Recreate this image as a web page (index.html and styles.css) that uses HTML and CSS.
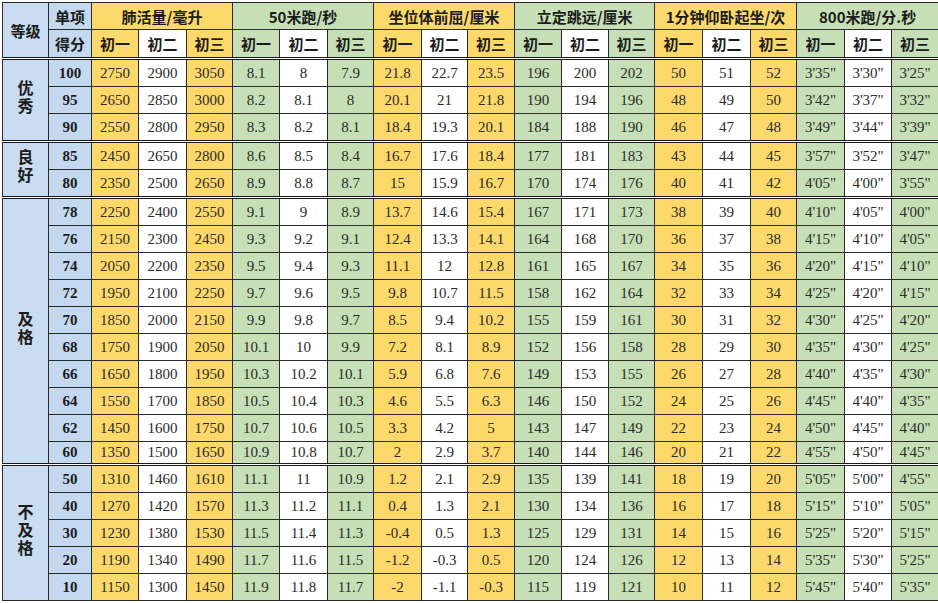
FILE: index.html
```html
<!DOCTYPE html>
<html lang="zh">
<head>
<meta charset="utf-8">
<title>体育成绩评分标准</title>
<link rel="stylesheet" href="styles.css">
</head>
<body>
<table class="score">
<colgroup>
<col class="c-grade"><col class="c-item">
<col class="c47"><col class="c48"><col class="c46">
<col class="c47"><col class="c48"><col class="c46">
<col class="c48"><col class="c46"><col class="c47">
<col class="c47"><col class="c47"><col class="c46">
<col class="c48"><col class="c48"><col class="c46">
<col class="c48"><col class="c47"><col class="c47">
</colgroup>
<thead>
<tr class="h1">
<th class="b lab" rowspan="2">等级</th>
<th class="b">单项</th>
<th class="y" colspan="3">肺活量/毫升</th>
<th class="g" colspan="3">50米跑/秒</th>
<th class="y" colspan="3">坐位体前屈/厘米</th>
<th class="g" colspan="3">立定跳远/厘米</th>
<th class="y" colspan="3">1分钟仰卧起坐/次</th>
<th class="g" colspan="3">800米跑/分.秒</th>
</tr>
<tr class="h2">
<th class="b">得分</th>
<th class="y">初一</th><th class="w">初二</th><th class="y">初三</th>
<th class="g">初一</th><th class="w">初二</th><th class="g">初三</th>
<th class="y">初一</th><th class="w">初二</th><th class="y">初三</th>
<th class="g">初一</th><th class="w">初二</th><th class="g">初三</th>
<th class="y">初一</th><th class="w">初二</th><th class="y">初三</th>
<th class="g">初一</th><th class="w">初二</th><th class="g">初三</th>
</tr>
</thead>
<tbody id="rows"></tbody>
</table>
<script src="app.js"></script>
</body>
</html>
```

FILE: app.js
```js
const groups = [
  { name: "优秀", rows: [
    ["100", "2750","2900","3050","8.1","8","7.9","21.8","22.7","23.5","196","200","202","50","51","52","3'35\"","3'30\"","3'25\""],
    ["95", "2650","2850","3000","8.2","8.1","8","20.1","21","21.8","190","194","196","48","49","50","3'42\"","3'37\"","3'32\""],
    ["90", "2550","2800","2950","8.3","8.2","8.1","18.4","19.3","20.1","184","188","190","46","47","48","3'49\"","3'44\"","3'39\""]
  ]},
  { name: "良好", rows: [
    ["85", "2450","2650","2800","8.6","8.5","8.4","16.7","17.6","18.4","177","181","183","43","44","45","3'57\"","3'52\"","3'47\""],
    ["80", "2350","2500","2650","8.9","8.8","8.7","15","15.9","16.7","170","174","176","40","41","42","4'05\"","4'00\"","3'55\""]
  ]},
  { name: "及格", rows: [
    ["78", "2250","2400","2550","9.1","9","8.9","13.7","14.6","15.4","167","171","173","38","39","40","4'10\"","4'05\"","4'00\""],
    ["76", "2150","2300","2450","9.3","9.2","9.1","12.4","13.3","14.1","164","168","170","36","37","38","4'15\"","4'10\"","4'05\""],
    ["74", "2050","2200","2350","9.5","9.4","9.3","11.1","12","12.8","161","165","167","34","35","36","4'20\"","4'15\"","4'10\""],
    ["72", "1950","2100","2250","9.7","9.6","9.5","9.8","10.7","11.5","158","162","164","32","33","34","4'25\"","4'20\"","4'15\""],
    ["70", "1850","2000","2150","9.9","9.8","9.7","8.5","9.4","10.2","155","159","161","30","31","32","4'30\"","4'25\"","4'20\""],
    ["68", "1750","1900","2050","10.1","10","9.9","7.2","8.1","8.9","152","156","158","28","29","30","4'35\"","4'30\"","4'25\""],
    ["66", "1650","1800","1950","10.3","10.2","10.1","5.9","6.8","7.6","149","153","155","26","27","28","4'40\"","4'35\"","4'30\""],
    ["64", "1550","1700","1850","10.5","10.4","10.3","4.6","5.5","6.3","146","150","152","24","25","26","4'45\"","4'40\"","4'35\""],
    ["62", "1450","1600","1750","10.7","10.6","10.5","3.3","4.2","5","143","147","149","22","23","24","4'50\"","4'45\"","4'40\""],
    ["60", "1350","1500","1650","10.9","10.8","10.7","2","2.9","3.7","140","144","146","20","21","22","4'55\"","4'50\"","4'45\""]
  ]},
  { name: "不及格", rows: [
    ["50", "1310","1460","1610","11.1","11","10.9","1.2","2.1","2.9","135","139","141","18","19","20","5'05\"","5'00\"","4'55\""],
    ["40", "1270","1420","1570","11.3","11.2","11.1","0.4","1.3","2.1","130","134","136","16","17","18","5'15\"","5'10\"","5'05\""],
    ["30", "1230","1380","1530","11.5","11.4","11.3","-0.4","0.5","1.3","125","129","131","14","15","16","5'25\"","5'20\"","5'15\""],
    ["20", "1190","1340","1490","11.7","11.6","11.5","-1.2","-0.3","0.5","120","124","126","12","13","14","5'35\"","5'30\"","5'25\""],
    ["10", "1150","1300","1450","11.9","11.8","11.7","-2","-1.1","-0.3","115","119","121","10","11","12","5'45\"","5'40\"","5'35\""]
  ]}
];
const colClass = ["y","w","y","g","w","g","y","w","y","g","w","g","y","w","y","g","w","g"];
const tbody = document.getElementById("rows");
groups.forEach(group => {
  group.rows.forEach((r, i) => {
    const tr = document.createElement("tr");
    if (i === 0) tr.className = "grp";
    if (r[0] === "60") tr.className = "short";
    if (i === 0) {
      const td = document.createElement("td");
      td.className = "b lab";
      td.rowSpan = group.rows.length;
      const span = document.createElement("span");
      span.className = "vert";
      span.textContent = group.name;
      td.appendChild(span);
      tr.appendChild(td);
    }
    const s = document.createElement("td");
    s.className = "b pts";
    s.textContent = r[0];
    tr.appendChild(s);
    for (let k = 1; k < r.length; k++) {
      const td = document.createElement("td");
      td.className = colClass[k - 1];
      td.textContent = r[k];
      tr.appendChild(td);
    }
    tbody.appendChild(tr);
  });
});
```

FILE: styles.css
```css
html, body {
  margin: 0;
  padding: 0;
  background: #ffffff;
}
.score {
  margin: 2px 0 0 2px;
  width: 936px;
  table-layout: fixed;
  border-collapse: collapse;
  font-family: "Liberation Serif", "Noto Sans CJK SC", serif;
  font-size: 15px;
  color: #2b2b2b;
}
.c-grade { width: 46px; }
.c-item { width: 43px; }
.c46 { width: 46px; }
.c47 { width: 47px; }
.c48 { width: 48px; }
.score th, .score td {
  border: 1px solid #2a2a2a;
  padding: 0;
  text-align: center;
  vertical-align: middle;
  white-space: nowrap;
  overflow: hidden;
}
.score th {
  font-family: "Noto Sans CJK SC", sans-serif;
  font-weight: 700;
  font-size: 15px;
  color: #1c1c1c;
}
.h1 th { height: 26px; }
.h2 th { height: 27px; }
.score td { height: 26px; }
.score tr.short td { height: 21px; }
.score tr.grp td { border-top: 3px double #1a1a1a; }
.b { background: #c4d8f0; }
.y { background: #fdd86a; }
.g { background: #c7dfb6; }
.w { background: #ffffff; }
.pts {
  font-weight: 700;
  color: #1c1c1c;
}
.lab {
  font-family: "Noto Sans CJK SC", sans-serif;
  font-weight: 700;
  font-size: 16px;
  color: #1c1c1c;
  background: #c9dcf1;
}
.vert {
  display: inline-block;
  writing-mode: vertical-rl;
  text-orientation: upright;
  letter-spacing: 2px;
  line-height: 16px;
}
```
